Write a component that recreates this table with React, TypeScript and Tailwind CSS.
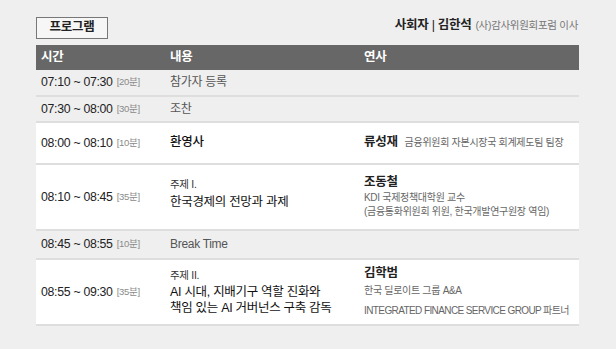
const FONT = "font-['Liberation_Sans','Noto_Sans_CJK_KR',sans-serif]";

function Time({ range, min }: { range: string; min: string }) {
  return (
    <div className="flex items-center pl-[5px] text-[12.3px] text-[#222]">
      <span>{range}</span>
      <span className="ml-[4px] text-[9.5px] text-[#8a8a8a]">[{min}]</span>
    </div>
  );
}

export default function App() {
  const grid = "grid grid-cols-[129px_194px_1fr]";

  return (
    <div className={`min-h-screen bg-[#efefef] px-[36px] pt-[16px] ${FONT} tracking-[-0.3px]`}>
      <div className="flex items-end justify-between w-[543px]">
        <div className="flex h-[22px] w-[72px] items-center justify-center border border-[#777] bg-[#f6f6f6] text-[12.5px] font-semibold text-[#222]">
          프로그램
        </div>
        <div className="flex items-baseline pb-[4px] pr-[1px]">
          <span className="text-[12.5px] font-bold text-[#222]">사회자 <span className="font-normal">|</span> 김한석</span>
          <span className="ml-[4px] text-[10.5px] text-[#777]">(사)감사위원회포럼 이사</span>
        </div>
      </div>

      <div className="mt-[6px] w-[543px]">
        <div className={`${grid} h-[25px] items-center bg-[#676767] text-[12.5px] font-bold text-white`}>
          <div className="pl-[5px]">시간</div>
          <div className="pl-[5px]">내용</div>
          <div className="pl-[5px]">연사</div>
        </div>

        <div className={`${grid} h-[27px] border-b-2 border-[#dedede]`}>
          <Time range="07:10 ~ 07:30" min="20분" />
          <div className="flex items-center pl-[5px] text-[12px] text-[#555]">참가자 등록</div>
          <div />
        </div>

        <div className={`${grid} h-[26px] border-b-2 border-[#dedede]`}>
          <Time range="07:30 ~ 08:00" min="30분" />
          <div className="flex items-center pl-[5px] text-[12px] text-[#555]">조찬</div>
          <div />
        </div>

        <div className={`${grid} h-[42px] border-b-2 border-[#dedede] bg-white`}>
          <Time range="08:00 ~ 08:10" min="10분" />
          <div className="flex items-center pl-[5px] text-[12.5px] font-medium text-[#111]">환영사</div>
          <div className="flex items-center pl-[5px]">
            <span className="text-[12.5px] font-bold text-[#222]">류성재</span>
            <span className="ml-[7px] text-[10px] text-[#666]">금융위원회 자본시장국 회계제도팀 팀장</span>
          </div>
        </div>

        <div className={`${grid} h-[66px] border-b-2 border-[#dedede] bg-white`}>
          <Time range="08:10 ~ 08:45" min="35분" />
          <div className="flex flex-col justify-center pb-[8px] pl-[5px]">
            <span className="text-[10.5px] leading-[18px] text-[#333]">주제 I.</span>
            <span className="text-[12.5px] leading-[18px] text-[#111]">한국경제의 전망과 과제</span>
          </div>
          <div className="flex flex-col justify-center pl-[5px]">
            <span className="text-[12.5px] font-bold leading-[17px] text-[#222]">조동철</span>
            <span className="text-[10px] leading-[14px] text-[#666]">KDI 국제정책대학원 교수</span>
            <span className="text-[10px] leading-[14px] text-[#666]">(금융통화위원회 위원, 한국개발연구원장 역임)</span>
          </div>
        </div>

        <div className={`${grid} h-[29px] border-b-2 border-[#dedede]`}>
          <Time range="08:45 ~ 08:55" min="10분" />
          <div className="flex items-center pl-[5px] text-[12px] text-[#555]">Break Time</div>
          <div />
        </div>

        <div className={`${grid} h-[66px] border-b-2 border-[#dedede] bg-white`}>
          <Time range="08:55 ~ 09:30" min="35분" />
          <div className="flex flex-col justify-center pl-[5px]">
            <span className="text-[10.5px] leading-[17px] text-[#333]">주제 II.</span>
            <span className="text-[12.5px] leading-[16px] text-[#111]">AI 시대, 지배기구 역할 진화와</span>
            <span className="text-[12.5px] leading-[16px] text-[#111]">책임 있는 AI 거버넌스 구축 감독</span>
          </div>
          <div className="flex flex-col justify-center pl-[5px]">
            <span className="text-[12.5px] font-bold leading-[17px] text-[#222]">김학범</span>
            <span className="text-[10px] leading-[17px] text-[#666]">한국 딜로이트 그룹 A&amp;A</span>
            <span className="mt-[3px] whitespace-nowrap text-[10px] leading-[17px] tracking-[-0.6px] text-[#666]">
              INTEGRATED FINANCE SERVICE GROUP 파트너
            </span>
          </div>
        </div>
      </div>
    </div>
  );
}
